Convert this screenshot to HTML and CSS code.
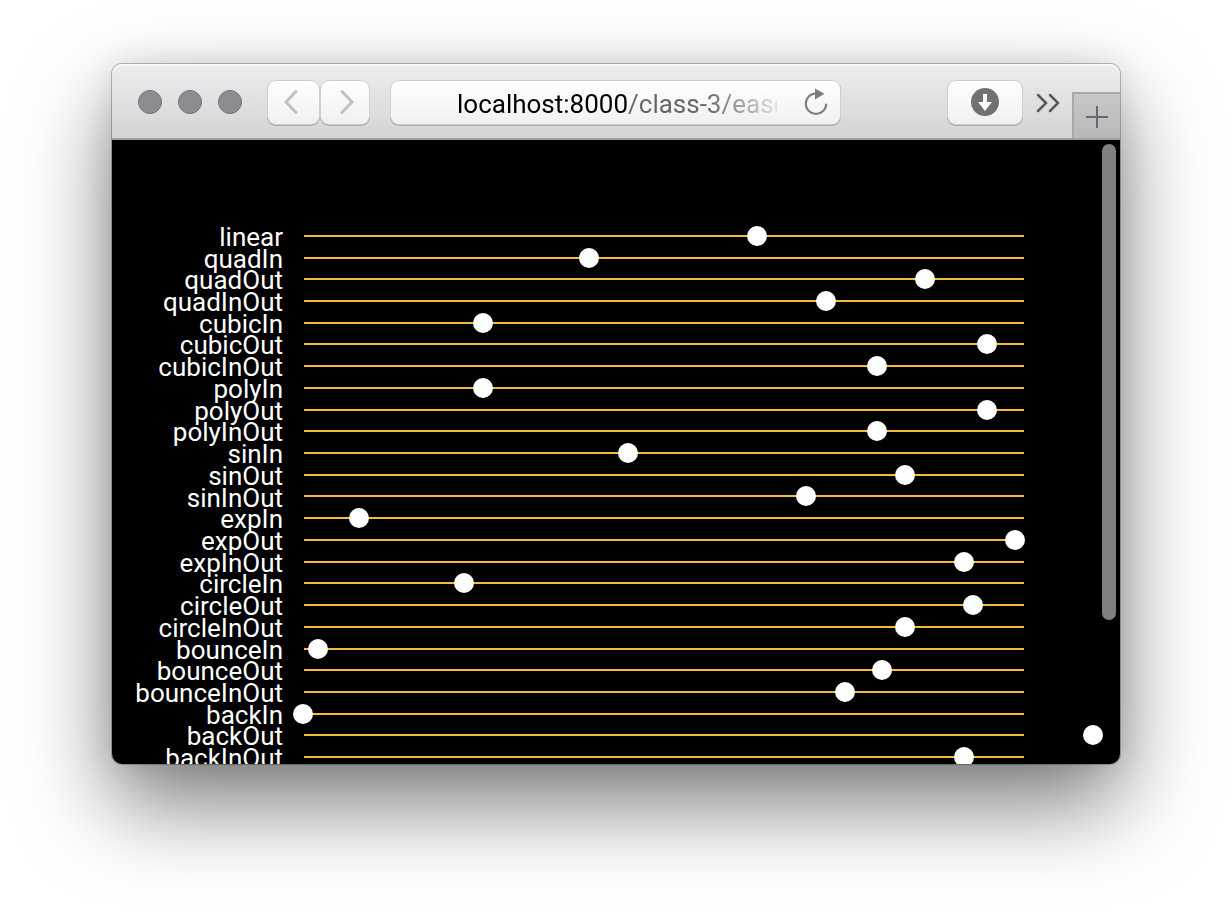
FILE: index.html
```html
<!DOCTYPE html>
<html lang="en">
<head>
<meta charset="utf-8">
<title>Easing functions</title>
<link rel="stylesheet" href="styles.css">
</head>
<body>
<main class="window">
  <header class="toolbar">
    <div class="lights">
      <button class="light" aria-label="Close"></button>
      <button class="light" aria-label="Minimize"></button>
      <button class="light" aria-label="Zoom"></button>
    </div>
    <nav class="history">
      <button class="btn back" aria-label="Back">
        <svg width="16" height="26" viewBox="0 0 16 26"><path d="M13 2.500L3 13L13 23.500"/></svg>
      </button>
      <button class="btn forward" aria-label="Forward">
        <svg width="16" height="26" viewBox="0 0 16 26"><path d="M3 2.500L13 13L3 23.500"/></svg>
      </button>
    </nav>
    <div class="address">
      <input class="url" type="text" aria-label="Address" value="localhost:8000/class-3/ease">
      <button class="reload" aria-label="Reload">
        <svg width="24" height="28" viewBox="0 0 24 28"><path class="arc" d="M12 5.500A10.200 10.200 0 1 0 22.200 15.700"/><path class="head" d="M11 0.500L20.500 5.800L11 11.500Z"/></svg>
      </button>
    </div>
    <button class="btn download" aria-label="Downloads">
      <svg width="28" height="28" viewBox="0 0 28 28"><circle cx="14" cy="14" r="14"/><path d="M12 6H16V14H21L14 23L7 14H12Z"/></svg>
    </button>
    <button class="more" aria-label="More">
      <svg width="24" height="20" viewBox="0 0 24 20"><path d="M2 2L10 10L2 18M14 2L22 10L14 18"/></svg>
    </button>
    <button class="new-tab" aria-label="New tab">
      <svg width="22" height="22" viewBox="0 0 22 22"><path d="M11 0V22M0 11H22"/></svg>
    </button>
  </header>
  <section class="page">
    <ul class="easings">
      <li class="row"><span class="name">linear</span><span class="track"><i class="dot" style="left:62.9%"></i></span></li>
      <li class="row"><span class="name">quadIn</span><span class="track"><i class="dot" style="left:39.56%"></i></span></li>
      <li class="row"><span class="name">quadOut</span><span class="track"><i class="dot" style="left:86.24%"></i></span></li>
      <li class="row"><span class="name">quadInOut</span><span class="track"><i class="dot" style="left:72.47%"></i></span></li>
      <li class="row"><span class="name">cubicIn</span><span class="track"><i class="dot" style="left:24.89%"></i></span></li>
      <li class="row"><span class="name">cubicOut</span><span class="track"><i class="dot" style="left:94.89%"></i></span></li>
      <li class="row"><span class="name">cubicInOut</span><span class="track"><i class="dot" style="left:79.57%"></i></span></li>
      <li class="row"><span class="name">polyIn</span><span class="track"><i class="dot" style="left:24.89%"></i></span></li>
      <li class="row"><span class="name">polyOut</span><span class="track"><i class="dot" style="left:94.89%"></i></span></li>
      <li class="row"><span class="name">polyInOut</span><span class="track"><i class="dot" style="left:79.57%"></i></span></li>
      <li class="row"><span class="name">sinIn</span><span class="track"><i class="dot" style="left:44.97%"></i></span></li>
      <li class="row"><span class="name">sinOut</span><span class="track"><i class="dot" style="left:83.5%"></i></span></li>
      <li class="row"><span class="name">sinInOut</span><span class="track"><i class="dot" style="left:69.72%"></i></span></li>
      <li class="row"><span class="name">expIn</span><span class="track"><i class="dot" style="left:7.64%"></i></span></li>
      <li class="row"><span class="name">expOut</span><span class="track"><i class="dot" style="left:98.72%"></i></span></li>
      <li class="row"><span class="name">expInOut</span><span class="track"><i class="dot" style="left:91.64%"></i></span></li>
      <li class="row"><span class="name">circleIn</span><span class="track"><i class="dot" style="left:22.26%"></i></span></li>
      <li class="row"><span class="name">circleOut</span><span class="track"><i class="dot" style="left:92.86%"></i></span></li>
      <li class="row"><span class="name">circleInOut</span><span class="track"><i class="dot" style="left:83.5%"></i></span></li>
      <li class="row"><span class="name">bounceIn</span><span class="track"><i class="dot" style="left:2%"></i></span></li>
      <li class="row"><span class="name">bounceOut</span><span class="track"><i class="dot" style="left:80.28%"></i></span></li>
      <li class="row"><span class="name">bounceInOut</span><span class="track"><i class="dot" style="left:75.14%"></i></span></li>
      <li class="row"><span class="name">backIn</span><span class="track"><i class="dot" style="left:-0.1%"></i></span></li>
      <li class="row"><span class="name">backOut</span><span class="track"><i class="dot" style="left:109.65%"></i></span></li>
      <li class="row"><span class="name">backInOut</span><span class="track"><i class="dot" style="left:91.64%"></i></span></li>
    </ul>
    <div class="scroll-thumb"></div>
  </section>
</main>
</body>
</html>
```
FILE: styles.css
```css
* { box-sizing: border-box; }

body {
  display: flex;
  height: 100vh;
  margin: 0;
  padding: 64px 112px 160px;
  overflow: hidden;
  background: #fff;
  font-family: Roboto, "Liberation Sans", sans-serif;
  font-size: 26px;
}

button {
  padding: 0;
  border: 0;
  background: none;
}

svg {
  display: block;
  fill: none;
}

.window {
  display: flex;
  flex: 1;
  flex-direction: column;
  min-width: 0;
  border-radius: 10px;
  box-shadow: 0 0 0 1px rgba(0, 0, 0, 0.24), 0 40px 88px rgba(0, 0, 0, 0.52), 0 0 32px rgba(0, 0, 0, 0.1);
}

.toolbar {
  display: flex;
  align-items: center;
  height: 76px;
  padding: 2px 0 0 26px;
  border-bottom: 2px solid #a09ea1;
  border-radius: 10px 10px 0 0;
  background: linear-gradient(#eeecef, #d5d3d6);
  box-shadow: inset 0 2px #f6f5f7;
  overflow: hidden;
}

.lights {
  display: flex;
  gap: 16px;
  margin-right: 26px;
}

.light {
  width: 24px;
  height: 24px;
  border: 1px solid #737176;
  border-radius: 50%;
  background: #8e8c91;
}

.history {
  display: flex;
  gap: 2px;
  margin-right: 22px;
}

.btn,
.address {
  height: 43px;
  border-radius: 8px;
  background: linear-gradient(#fff, #f1f0f1);
  box-shadow: 0 0 0 1px #cfcdd0, 0 1px 0 1px #a9a7aa;
}

.btn {
  display: flex;
  align-items: center;
  justify-content: center;
}

.back { width: 51px; padding-right: 6px; }
.forward { width: 48px; padding-left: 4px; }

.history path {
  stroke: #c2c1c3;
  stroke-width: 3;
  stroke-linecap: round;
}

.address {
  display: flex;
  flex: 1;
  align-items: center;
  justify-content: space-between;
  min-width: 0;
  padding: 0 12px 0 66px;
}

.url {
  width: 320px;
  min-width: 0;
  height: 40px;
  padding: 4px 0 0;
  border: 0;
  outline: 0;
  background: linear-gradient(90deg, #000 170px, #666 170px, #666 250px, transparent 332px);
  background-clip: text;
  -webkit-background-clip: text;
  color: transparent;
  font: inherit;
}

.arc { stroke: #7d7d7d; stroke-width: 2; }
.head { fill: #7d7d7d; }

.download {
  width: 74px;
  margin-left: 108px;
}

.download circle { fill: #717171; }
.download path { fill: #fff; }

.more { margin: 2px 12px 0 14px; }

.more path {
  stroke: #5b595d;
  stroke-width: 2.500;
  stroke-linecap: round;
}

.new-tab {
  display: flex;
  align-items: center;
  align-self: flex-end;
  justify-content: center;
  width: 48px;
  height: 46px;
  padding-top: 2px;
  border: solid #a9a7aa;
  border-width: 2px 0 0 2px;
  background: linear-gradient(#c8c6c9, #bab8bb);
}

.new-tab path { stroke: #69676b; stroke-width: 2; }

.page {
  position: relative;
  flex: 1;
  min-height: 0;
  padding: 85px 96px 0 0;
  border-radius: 0 0 10px 10px;
  background: #000;
  overflow: hidden;
}

.easings {
  display: grid;
  grid-template-rows: repeat(25, 1fr);
  height: 543px;
  margin: 0;
  padding: 0;
  list-style: none;
}

.row {
  display: flex;
  align-items: center;
  gap: 21px;
  min-height: 0;
  color: #fff;
  line-height: 20px;
}

.name {
  width: 171px;
  padding-top: 2px;
  text-align: right;
}

.track {
  position: relative;
  flex: 1;
  height: 2px;
  background: #f7bb38;
}

.dot {
  position: absolute;
  top: -9px;
  width: 20px;
  height: 20px;
  margin-left: -10px;
  border-radius: 50%;
  background: #fff;
}

.scroll-thumb {
  position: absolute;
  top: 4px;
  right: 4px;
  width: 14px;
  height: 476px;
  border-radius: 7px;
  background: #808080;
}
```
